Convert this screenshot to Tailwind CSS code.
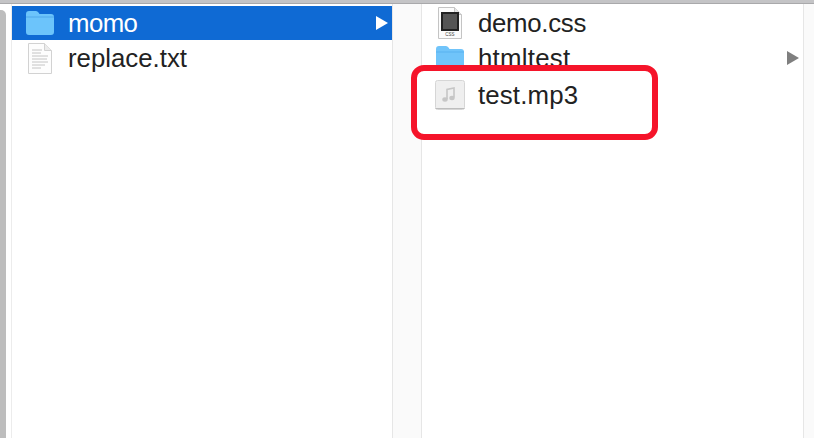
<!DOCTYPE html>
<html lang="en">
<head>
    <meta charset="UTF-8">
    <script src="https://cdn.jsdelivr.net/npm/@tailwindcss/browser@4"></script>
    <title>Finder</title>
</head>
<body class="bg-white">
    <div class="relative w-[814px] h-[438px] overflow-hidden flex flex-col font-['Liberation_Sans',sans-serif] text-[25.8px] text-[#222]">
        <div class="h-[4px] shrink-0 bg-[#c4c4c6] border-b border-[#a9a9ab]"></div>
        <div class="flex flex-1 min-h-0">
            <!-- scrollbar strip of the previous column -->
            <div class="w-[6px] shrink-0 mt-[6px] bg-[#bdbdbd] rounded-tr-[5px]"></div>
            <div class="w-[6px] shrink-0 bg-white border-r border-[#ececec]"></div>

            <!-- first column -->
            <div class="w-[380px] shrink-0 pt-[2px]">
                <div class="h-[34px] flex items-center bg-[#0f6ad4] text-white">
                    <svg class="ml-[13px] w-[30px] h-[26px]" viewBox="0 0 30 26">
                        <path d="M1 4q0-3 3-3h7q1.500 0 2.500 1.500l1 1.500h11.500q3 0 3 3v15q0 3-3 3H4q-3 0-3-3z" fill="#6cc4fb"/>
                        <path d="M1 7h28" stroke="#4fa8ec" stroke-width="1"/>
                    </svg>
                    <span class="ml-[13px] pt-[2px] leading-none tracking-[-0.6px]">momo</span>
                    <svg class="ml-auto mr-[4px] w-[12px] h-[14px]" viewBox="0 0 12 14"><path d="M0 0l12 7-12 7z" fill="#fff"/></svg>
                </div>
                <div class="h-[36px] flex items-center">
                    <svg class="ml-[16px] w-[24px] h-[31px]" viewBox="0 0 24 31">
                        <path d="M.5.500h16l7 7v23H.5z" fill="#fdfdfd" stroke="#d2d2d2"/>
                        <path d="M16.500.500v7h7" fill="#ececec" stroke="#d2d2d2"/>
                        <path d="M4 7h10M4 10h9M4 13h16M4 16h15M4 19h16M4 22h13M4 25h9" stroke="#c4c4c4" stroke-width="1"/>
                    </svg>
                    <span class="ml-[16px] pt-[2px] leading-none">replace.txt</span>
                </div>
            </div>

            <!-- gutter between columns -->
            <div class="w-[30px] shrink-0 bg-[#fafafa] border-x border-[#e6e6e6]"></div>

            <!-- second column -->
            <div class="w-[381px] shrink-0 pt-[2px]">
                <div class="h-[34px] flex items-center">
                    <svg class="ml-[16px] w-[24px] h-[32px]" viewBox="0 0 24 32">
                        <path d="M.5.500h16l7 7v24H.5z" fill="#fbfbfb" stroke="#c4c4c4"/>
                        <path d="M16.500.500v7h7" fill="#e6e6e6" stroke="#c4c4c4"/>
                        <rect x="4" y="6" width="16" height="17" fill="#555" stroke="#222" stroke-width="2"/>
                        <text x="12" y="29" font-size="4.500" text-anchor="middle" fill="#444" font-family="Liberation Sans">CSS</text>
                    </svg>
                    <span class="ml-[16px] pt-[2px] leading-none tracking-[-0.3px]">demo.css</span>
                </div>
                <div class="h-[36px] flex items-center">
                    <svg class="ml-[13px] w-[30px] h-[26px]" viewBox="0 0 30 26">
                        <path d="M1 4q0-3 3-3h7q1.500 0 2.500 1.500l1 1.500h11.500q3 0 3 3v15q0 3-3 3H4q-3 0-3-3z" fill="#70c4fa"/>
                        <path d="M1 7h28" stroke="#59b2f0" stroke-width="1"/>
                    </svg>
                    <span class="ml-[13px] pt-[2px] leading-none tracking-[0.25px]">htmltest</span>
                    <svg class="ml-auto mr-[4px] w-[12px] h-[14px]" viewBox="0 0 12 14"><path d="M0 0l12 7-12 7z" fill="#7f7f7f"/></svg>
                </div>
                <div class="relative z-10 h-[36px] flex items-center">
                    <svg class="ml-[13px] mt-[2px] w-[30px] h-[30px]" viewBox="0 0 30 30">
                        <rect x=".5" y=".5" width="29" height="29" rx="2" fill="#efefef" stroke="#d6d6d6"/>
                        <path d="M.5 28.500h29" stroke="#bdbdbd"/>
                        <path d="M12 19V9.500l7-1.500v9.500" fill="none" stroke="#c6c6c6" stroke-width="1.600"/>
                        <ellipse cx="10" cy="19.500" rx="2.700" ry="2.200" fill="#c6c6c6"/>
                        <ellipse cx="17" cy="18" rx="2.700" ry="2.200" fill="#c6c6c6"/>
                    </svg>
                    <span class="ml-[13px] pt-[3px] leading-none tracking-[0.15px]">test.mp3</span>
                </div>
            </div>

            <div class="flex-1 bg-[#fafafa] border-l border-[#e6e6e6]"></div>
        </div>

        <!-- red annotation over the list, its white fill hides the row behind it -->
        <div class="absolute left-[411px] top-[65px] w-[247px] h-[75px] bg-white border-[6px] border-[#f5142a] rounded-[13px]"></div>
    </div>
</body>
</html>
